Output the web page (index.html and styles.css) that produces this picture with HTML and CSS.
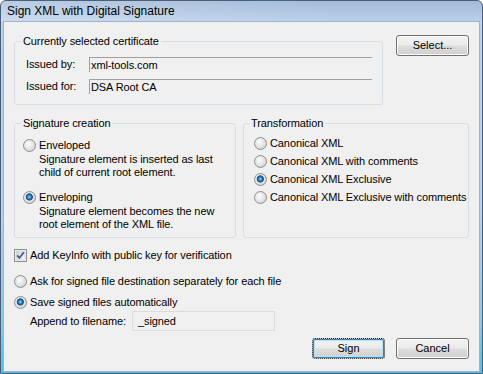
FILE: index.html
```html
<!DOCTYPE html>
<html lang="en">
<head>
  <meta charset="UTF-8" />
  <title>Sign XML with Digital Signature</title>
  <link rel="stylesheet" href="styles.css">
</head>
<body>
  <div class="window">
    <div class="titlebar">Sign XML with Digital Signature</div>
    <div class="client">

      <div class="top-row">
        <fieldset class="group cert">
          <legend>Currently selected certificate</legend>
          <div class="cert-grid">
            <span class="cert-label">Issued by:</span>
            <span class="cert-value">xml-tools.com</span>
            <span class="cert-label">Issued for:</span>
            <span class="cert-value">DSA Root CA</span>
          </div>
        </fieldset>
        <button class="btn">Select...</button>
      </div>

      <div class="groups">
        <fieldset class="group creation">
          <legend>Signature creation</legend>
          <div class="option"><span class="radio"></span>Enveloped</div>
          <p class="desc">Signature element is inserted as last<br>child of current root element.</p>
          <div class="option second"><span class="radio checked"></span>Enveloping</div>
          <p class="desc">Signature element becomes the new<br>root element of the XML file.</p>
        </fieldset>

        <fieldset class="group transform">
          <legend>Transformation</legend>
          <div class="option"><span class="radio"></span>Canonical XML</div>
          <div class="option"><span class="radio"></span>Canonical XML with comments</div>
          <div class="option"><span class="radio checked"></span>Canonical XML Exclusive</div>
          <div class="option"><span class="radio"></span>Canonical XML Exclusive with comments</div>
        </fieldset>
      </div>

      <div class="option keyinfo">
        <svg class="check" width="13" height="13" viewBox="0 0 13 13">
          <defs>
            <linearGradient id="cb" x1="0" y1="0" x2="1" y2="1">
              <stop offset="0" stop-color="#d0d3d8"/>
              <stop offset="1" stop-color="#f7f7f7"/>
            </linearGradient>
          </defs>
          <rect x="0.5" y="0.5" width="12" height="12" fill="#f4f4f4" stroke="#8e8f8f"/>
          <rect x="2" y="2" width="9" height="9" fill="url(#cb)" stroke="#c9ccd1" stroke-width="0.6"/>
          <path d="M3.2 6.4 L5.4 9 L9.9 3.2" fill="none" stroke="#3f5786" stroke-width="1.7"/>
        </svg>
        Add KeyInfo with public key for verification
      </div>

      <div class="option ask"><span class="radio"></span>Ask for signed file destination separately for each file</div>
      <div class="option save"><span class="radio checked"></span>Save signed files automatically</div>

      <div class="append">
        <span class="append-label">Append to filename:</span>
        <span class="append-field">_signed</span>
      </div>

      <div class="actions">
        <button class="btn default">Sign</button>
        <button class="btn">Cancel</button>
      </div>

    </div>
  </div>
</body>
</html>
```

FILE: styles.css
```css
body {
  margin: 0;
  background: #ffffff;
  font-family: 'Liberation Sans', Arial, sans-serif;
  font-size: 11px;
  line-height: 13px;
  letter-spacing: -0.1px;
  color: #000;
}
.window {
  width: 483px;
  height: 374px;
  box-sizing: border-box;
  border: 1px solid #4a607a;
  border-radius: 6px 6px 0 0;
  padding: 0 3px 2px 3px;
  display: flex;
  flex-direction: column;
  background: linear-gradient(to bottom, #a3bbd8 0, #bcd1ea 21px, #b9d0ec 55%, #8ccbea 85%, #4cc1e6 100%);
}
.titlebar {
  height: 21px;
  line-height: 21px;
  font-size: 12px;
  letter-spacing: 0;
  flex: none;
  background: linear-gradient(to right, rgba(255, 255, 255, 0.25), rgba(255, 255, 255, 0) 70%);
  margin: 0 -3px;
  padding-left: 6px;
  border-radius: 5px 5px 0 0;
}
.client {
  flex: 1;
  background: #f0f0f0;
  box-shadow: 0 0 0 1px #9ab3d1;
  padding: 13px 10px 0 10px;
  display: flex;
  flex-direction: column;
}
.group {
  margin: 0;
  padding: 0 6px 0 6px;
  box-sizing: border-box;
  border: 1px solid #d5dfe5;
  border-radius: 3px;
  min-width: 0;
}
.group legend {
  padding: 0 2px;
  line-height: 13px;
}
.top-row {
  display: flex;
  justify-content: space-between;
  align-items: flex-start;
}
.cert {
  width: 369px;
  padding-top: 9px;
  padding-bottom: 10px;
}
.cert-grid {
  display: grid;
  grid-template-columns: 63px 283px;
  row-gap: 7px;
  margin-left: 5px;
}
.cert-label {
  height: 15px;
  line-height: 15px;
}
.cert-value {
  height: 15px;
  box-sizing: border-box;
  border-top: 1px solid #a0a0a0;
  border-left: 1px solid #a0a0a0;
  padding-left: 1px;
  line-height: 14px;
}
.btn {
  width: 73px;
  height: 21px;
  padding: 0;
  font: inherit;
  color: #000;
  border: 1px solid #707070;
  border-radius: 3px;
  background: linear-gradient(to bottom, #f2f2f2 0, #ebebeb 48%, #dddddd 52%, #cfcfcf 100%);
  box-shadow: inset 0 0 0 1px #fbfbfb;
  flex: none;
}
.btn.default {
  border: 1px dotted #222;
  box-shadow: inset 0 0 0 1px #3c7fb1, inset 0 0 0 2px #b7e2f8;
}
.groups {
  display: flex;
  gap: 7px;
  margin-top: 12px;
}
.creation {
  width: 222px;
  padding-top: 9px;
  padding-bottom: 6px;
}
.creation .option,
.creation .desc {
  margin-left: 2px;
}
.transform {
  flex: 1;
  padding-left: 5px;
  padding-top: 7px;
  padding-bottom: 6px;
  display: flex;
  flex-direction: column;
  gap: 5px;
}
.transform .option {
  margin-left: 5px;
}
.option {
  display: flex;
  align-items: center;
  gap: 3px;
  height: 13px;
  white-space: nowrap;
}
.creation .option.second {
  margin-top: 12px;
}
.creation .desc {
  margin: 1px 0 0 18px;
  white-space: nowrap;
}
.radio {
  width: 13px;
  height: 13px;
  box-sizing: border-box;
  flex: none;
  border: 1px solid #8e8f8f;
  border-radius: 50%;
  background: radial-gradient(circle at 40% 38%, #fdfdfd 0, #e6e6e6 45%, #c9c9c9 100%);
}
.radio.checked {
  background:
    radial-gradient(circle at 48% 45%, #8fdcfb 0, #2f8fd2 1.6px, #1b4d83 3px, #3c5f86 3.4px, rgba(0, 0, 0, 0) 3.9px),
    radial-gradient(circle at 40% 38%, #fdfdfd 0, #e6e6e6 45%, #c9c9c9 100%);
}
.check {
  flex: none;
}
.keyinfo {
  margin-top: 11px;
}
.ask {
  margin-top: 13px;
}
.save {
  margin-top: 8px;
}
.append {
  display: flex;
  align-items: center;
  margin-top: 2px;
  padding-left: 16px;
}
.append-label {
  width: 102px;
}
.append-field {
  width: 143px;
  height: 20px;
  box-sizing: border-box;
  border: 1px solid #dcdcdc;
  padding-left: 5px;
  line-height: 18px;
}
.actions {
  display: flex;
  justify-content: flex-end;
  gap: 11px;
  margin-top: 7px;
}
```
